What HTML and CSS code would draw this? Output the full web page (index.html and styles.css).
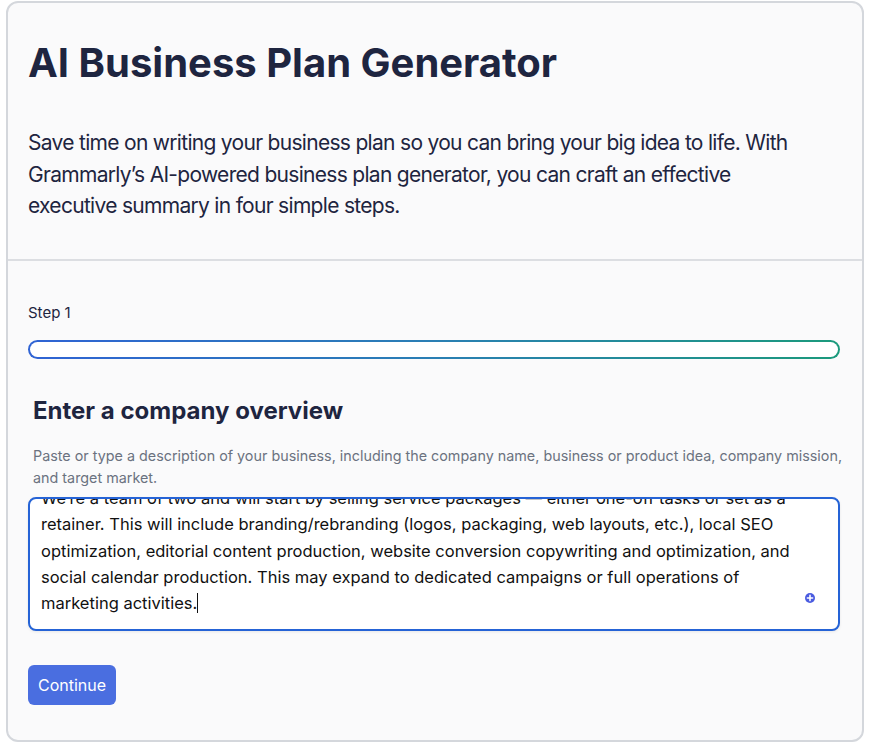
FILE: index.html
```html
<!DOCTYPE html>
<html lang="en">
<head>
<meta charset="utf-8">
<title>AI Business Plan Generator</title>
<link rel="stylesheet" href="styles.css">
</head>
<body>
<main class="card">
  <header class="intro">
    <h1 class="title">AI Business Plan Generator</h1>
    <p class="lead">Save time on writing your business plan so you can bring your big idea to life. With Grammarly’s AI-powered business plan generator, you can craft an effective executive summary in four simple steps.</p>
  </header>
  <section class="step">
    <div class="step-label">Step 1</div>
    <div class="progress"><div class="progress-inner"></div></div>
    <div class="question">
      <h2 class="q-title">Enter a company overview</h2>
      <p class="q-help">Paste or type a description of your business, including the company name, business or product idea, company mission, and target market.</p>
    </div>
    <div class="textbox">
      <div class="textbox-content">We’re a team of two and will start by selling service packages — either one-off tasks or set as a<br>retainer. This will include branding/rebranding (logos, packaging, web layouts, etc.), local SEO<br>optimization, editorial content production, website conversion copywriting and optimization, and<br>social calendar production. This may expand to dedicated campaigns or full operations of<br>marketing activities.<span class="caret"></span></div>
      <svg class="g-icon" width="10" height="10" viewBox="0 0 10 10"><circle cx="5" cy="5" r="5" fill="#4a5be0"/><path d="M5 2.4v5.2M2.4 5h5.2" stroke="#fff" stroke-width="1.6" stroke-linecap="round"/></svg>
    </div>
    <button class="btn">Continue</button>
  </section>
</main>
</body>
</html>
```

FILE: styles.css
```css
html, body {
  margin: 0;
  padding: 0;
  background: #ffffff;
}
body {
  padding: 1px 8px 1px 6px;
  font-family: Inter, "Noto Sans", sans-serif;
  color: #1e2540;
}
.card {
  box-sizing: border-box;
  width: 858px;
  height: 741px;
  border: 2px solid #d4d7dc;
  border-radius: 12px;
  background: #fafafb;
  overflow: hidden;
}
.intro {
  padding: 34px 22px 0 20px;
  height: 222px;
  border-bottom: 2px solid #dcdee2;
}
.title {
  margin: 0;
  font-size: 40px;
  line-height: 52px;
  font-weight: 700;
  letter-spacing: 0;
  color: #1e2540;
}
.lead {
  margin: 38px 0 0;
  max-width: 775px;
  font-size: 21px;
  line-height: 31.5px;
  font-weight: 400;
  letter-spacing: -0.7px;
  color: #1e2540;
}
.step {
  padding: 42px 22px 0 20px;
}
.step-label {
  font-size: 15px;
  line-height: 20px;
  color: #1e2540;
}
.progress {
  margin-top: 17px;
  height: 19px;
  border-radius: 10px;
  padding: 2px;
  box-sizing: border-box;
  background: linear-gradient(90deg, #2f63d4 0%, #2a7fb4 50%, #1b9a7c 100%);
}
.progress-inner {
  height: 100%;
  border-radius: 8px;
  background: #ffffff;
}
.question {
  padding-left: 5px;
  margin-right: -20px;
  margin-top: 36px;
}
.q-title {
  margin: 0;
  font-size: 24px;
  line-height: 32px;
  font-weight: 700;
  color: #1e2540;
}
.q-help {
  margin: 18px 0 0;
  font-size: 14.35px;
  line-height: 22px;
  color: #6b7280;
}
.textbox {
  position: relative;
  margin-top: 8px;
  height: 134px;
  box-sizing: border-box;
  border: 2px solid #2563d6;
  border-radius: 8px;
  background: #ffffff;
  overflow: hidden;
  box-shadow: 0 1px 3px rgba(0,0,0,0.08);
}
.textbox-content {
  margin-top: -14px;
  padding: 0 11px;
  font-size: 16.5px;
  line-height: 26.3px;
  white-space: nowrap;
  color: #111111;
}
.caret {
  display: inline-block;
  width: 1px;
  height: 20px;
  background: #111;
  vertical-align: -4px;
}
.g-icon {
  position: absolute;
  right: 23px;
  bottom: 26px;
}
.btn {
  margin-top: 34px;
  height: 40px;
  padding: 0 10px;
  border: none;
  border-radius: 6px;
  background: #4a6ee0;
  color: #ffffff;
  font-family: Inter, "Noto Sans", sans-serif;
  font-size: 16px;
}
```
